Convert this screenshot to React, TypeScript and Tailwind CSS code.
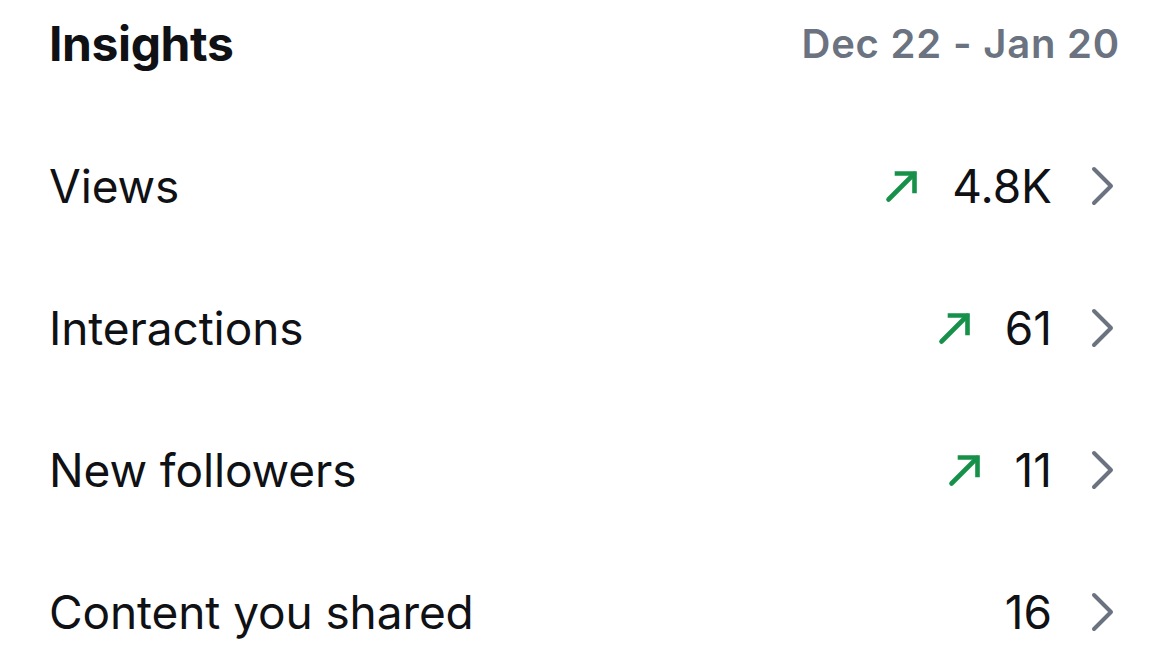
import React from "react";

type Row = { label: string; value: string; up: boolean };

const rows: Row[] = [
  { label: "Views", value: "4.8K", up: true },
  { label: "Interactions", value: "61", up: true },
  { label: "New followers", value: "11", up: true },
  { label: "Content you shared", value: "16", up: false },
];

function TrendUp() {
  return (
    <svg width="34" height="34" viewBox="0 0 34 34" fill="none" className="shrink-0">
      <path d="M3.5 30.5 L29 5" stroke="#17904a" strokeWidth="4.6" strokeLinecap="round" />
      <path d="M12 4.5 H29.5 V22" stroke="#17904a" strokeWidth="4.6" strokeLinecap="square" strokeLinejoin="miter" />
    </svg>
  );
}

function Chevron() {
  return (
    <svg width="30" height="40" viewBox="0 0 30 40" fill="none" className="shrink-0">
      <path d="M4 3 L21 20 L4 37" stroke="#6b7280" strokeWidth="4" strokeLinecap="round" strokeLinejoin="round" />
    </svg>
  );
}

export default function App() {
  return (
    <div className="w-[1170px] h-[658px] overflow-hidden bg-white pl-[49px] pr-[50px] font-['Inter',sans-serif] text-[#0f1115]">
      {/* Header */}
      <div className="h-[88px] flex items-center justify-between">
        <h1 className="text-[48px] font-bold leading-none tracking-[-0.4px]">Insights</h1>
        <span className="text-[40px] font-semibold leading-none tracking-[0.8px] text-[#6b7280]">Dec 22 - Jan 20</span>
      </div>

      {/* Rows */}
      <div className="pt-[27px] flex flex-col">
        {rows.map((r) => (
          <div key={r.label} className="h-[142px] flex items-center justify-between">
            <span className="text-[46px] leading-none tracking-[-0.1px]">{r.label}</span>
            <div className="flex items-center">
              {r.up && (
                <div className="mr-[33px]">
                  <TrendUp />
                </div>
              )}
              <span className="text-[46px] leading-none mr-[38px]">{r.value}</span>
              <Chevron />
            </div>
          </div>
        ))}
      </div>
    </div>
  );
}
